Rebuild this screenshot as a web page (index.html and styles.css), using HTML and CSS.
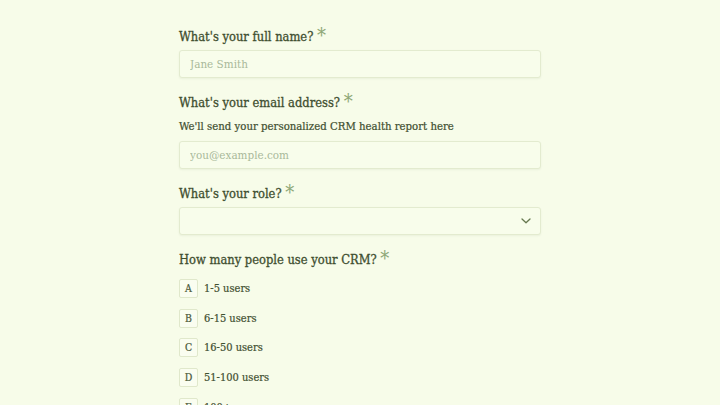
FILE: index.html
```html
<!DOCTYPE html>
<html lang="en">
  <head>
    <meta charset="UTF-8" />
    <meta name="viewport" content="width=device-width, initial-scale=1.0" />
    <title>CRM Health Check</title>
    <link rel="stylesheet" href="styles.css">
  </head>
  <body>
    <form class="form">
      <div class="question">
        <label class="label" for="fullName">What's your full name? <span class="req">*</span></label>
        <input class="field" type="text" id="fullName" placeholder="Jane Smith" />
      </div>

      <div class="question">
        <label class="label" for="email">What's your email address? <span class="req">*</span></label>
        <p class="hint">We'll send your personalized CRM health report here</p>
        <input class="field" type="email" id="email" placeholder="you@example.com" />
      </div>

      <div class="question">
        <label class="label" for="role">What's your role? <span class="req">*</span></label>
        <div class="select-wrap">
          <select class="field select" id="role">
            <option value=""></option>
          </select>
          <svg class="chevron" width="12" height="8" viewBox="0 0 12 8">
            <path d="M2 2 L6 5.8 L10 2" fill="none" stroke="#66784f" stroke-width="1.3" stroke-linecap="round" stroke-linejoin="round" />
          </svg>
        </div>
      </div>

      <div class="question">
        <div class="label">How many people use your CRM? <span class="req">*</span></div>
        <div class="choices">
          <div class="choice"><span class="key">A</span>1-5 users</div>
          <div class="choice"><span class="key">B</span>6-15 users</div>
          <div class="choice"><span class="key">C</span>16-50 users</div>
          <div class="choice"><span class="key">D</span>51-100 users</div>
          <div class="choice"><span class="key">E</span>100+ users</div>
        </div>
      </div>
    </form>
  </body>
</html>
```

FILE: styles.css
```css
* {
  margin: 0;
  padding: 0;
  box-sizing: border-box;
}

body {
  font-family: "DejaVu Serif Condensed", "DejaVu Serif", serif;
  background-color: #f7fce9;
  color: #3f4f30;
}

.form {
  width: 362px;
  margin: 0 auto;
  padding-top: 26px;
  display: flex;
  flex-direction: column;
  gap: 14px;
}

.question {
  display: flex;
  flex-direction: column;
}

.label {
  display: block;
  font-size: 12.8px;
  line-height: 22px;
  color: #3f4f30;
  -webkit-text-stroke: 0.3px #3f4f30;
  margin-bottom: 2px;
}

.req {
  color: #8fa878;
  -webkit-text-stroke: 0;
  font-size: 20px;
  vertical-align: top;
  line-height: 19px;
}

.hint {
  font-size: 11.3px;
  line-height: 18px;
  margin-top: 2px;
  margin-bottom: 5px;
  color: #3f4f30;
  -webkit-text-stroke: 0.2px #3f4f30;
}

.field {
  width: 100%;
  height: 28px;
  padding: 0 10px;
  border: 1px solid #e3ebcf;
  border-radius: 3px;
  background-color: #f8fdeb;
  box-shadow: 0 1px 2px rgba(90, 110, 60, 0.08);
  font-family: inherit;
  font-size: 11.6px;
  color: #3f4f30;
  outline: none;
}

.field::placeholder {
  color: #a9b99a;
}

.select-wrap {
  position: relative;
}

.select {
  appearance: none;
  -webkit-appearance: none;
}

.chevron {
  position: absolute;
  right: 9px;
  top: 10px;
  pointer-events: none;
}

.choices {
  display: flex;
  flex-direction: column;
  gap: 10.7px;
  margin-top: 6px;
}

.choice {
  display: flex;
  align-items: center;
  font-size: 11px;
  line-height: 19px;
  color: #3f4f30;
  -webkit-text-stroke: 0.2px #3f4f30;
}

.key {
  width: 19px;
  height: 19px;
  margin-right: 6px;
  display: flex;
  align-items: center;
  justify-content: center;
  font-size: 10.5px;
  border: 1px solid #e0e8cb;
  border-radius: 2px;
  background-color: #fafdf0;
  color: #4d5c3b;
}
```
